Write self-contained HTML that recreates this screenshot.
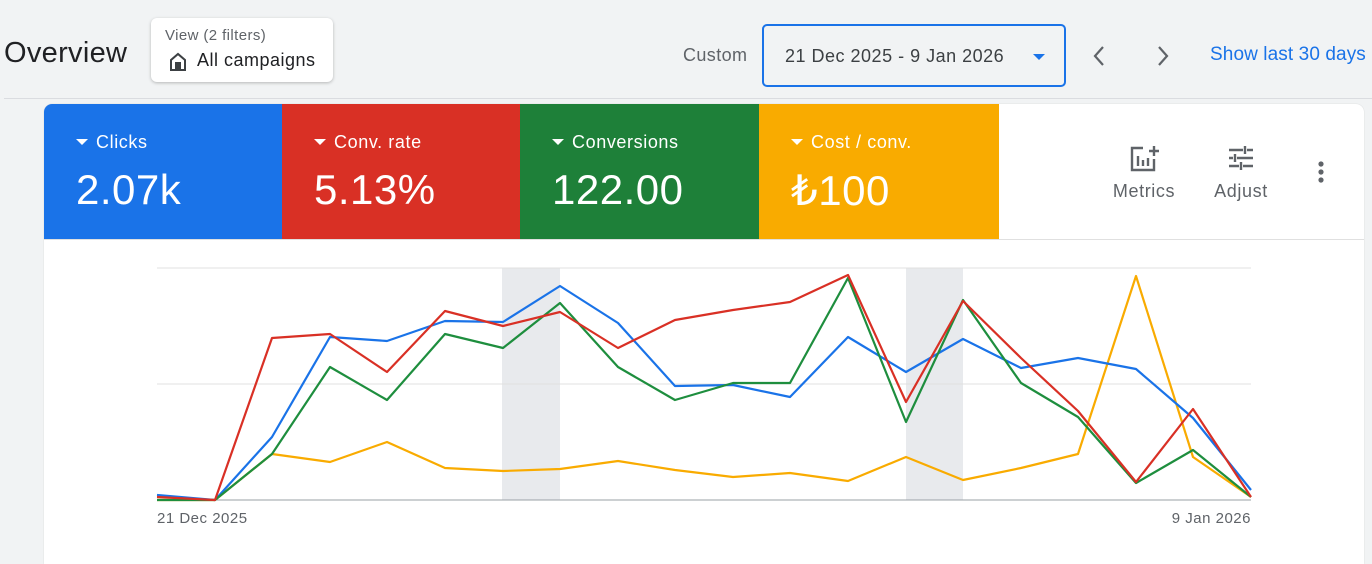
<!DOCTYPE html>
<html><head><meta charset="utf-8"><style>
*{margin:0;padding:0;box-sizing:border-box}
body{width:1372px;height:552px;background:#f1f3f4;font-family:"Liberation Sans",sans-serif;position:relative;overflow:hidden;color:#202124}
.abs{position:absolute}
.ov{left:4px;top:37px;font-size:29px;letter-spacing:0.3px;color:#202124}
.view{left:151px;top:18px;width:182px;height:64px;background:#fff;border-radius:6px;box-shadow:0 1px 3px rgba(0,0,0,.25)}
.view .t1{position:absolute;left:14px;top:9px;font-size:15px;letter-spacing:0.4px;color:#5f6368}
.view .t2{position:absolute;left:46px;top:32px;font-size:18px;letter-spacing:0.5px;color:#202124}
.hr{left:4px;top:98px;width:1368px;height:1px;background:#dadce0}
.custom{left:683px;top:45px;font-size:18px;letter-spacing:0.4px;color:#5f6368}
.date{left:762px;top:24px;width:304px;height:63px;border:2px solid #1a73e8;border-radius:5px;background:#f1f3f4}
.date span{position:absolute;left:21px;top:20px;font-size:18px;letter-spacing:0.5px;color:#3c4043}
.date i{position:absolute;left:269px;top:28px;border-left:6px solid transparent;border-right:6px solid transparent;border-top:6px solid #1a73e8}
.link{left:1210px;top:44px;font-size:19px;letter-spacing:0.1px;color:#1a73e8}
.card{left:44px;top:104px;width:1320px;height:460px;background:#fff;border-radius:8px 8px 0 0;overflow:hidden;box-shadow:0 0 1px rgba(0,0,0,.2)}
.tile{position:absolute;top:0;height:135px;color:#fff}
.tile .l{position:absolute;left:32px;top:28px;font-size:18px;letter-spacing:0.6px}
.tile .l:before{content:"";display:inline-block;border-left:6px solid transparent;border-right:6px solid transparent;border-top:6px solid #fff;margin-right:8px;vertical-align:3px}
.tile .v{position:absolute;left:32px;top:62px;font-size:42px;letter-spacing:0.5px}
.lbl{font-size:18px;letter-spacing:0.6px;color:#5f6368;width:100px;text-align:center}
</style></head><body>
<div class="abs ov">Overview</div>
<div class="abs view"><div class="t1">View (2 filters)</div>
<svg class="abs" style="left:17px;top:34px" width="20" height="20" viewBox="0 0 20 20"><path d="M3 18V8l7-6 7 6v10z" fill="none" stroke="#3c4043" stroke-width="2"/><rect x="7" y="10" width="6" height="8" fill="#3c4043"/></svg>
<div class="t2">All campaigns</div></div>
<div class="abs hr"></div>
<div class="abs custom">Custom</div>
<div class="abs date"><span>21 Dec 2025 - 9 Jan 2026</span><i></i></div>
<svg class="abs" style="left:1088px;top:44px" width="22" height="24"><path d="M15 3 7 12l8 9" fill="none" stroke="#5f6368" stroke-width="2.2"/></svg>
<svg class="abs" style="left:1152px;top:44px" width="22" height="24"><path d="M7 3l8 9-8 9" fill="none" stroke="#5f6368" stroke-width="2.2"/></svg>
<div class="abs link">Show last 30 days</div>
<div class="abs card">
<div class="tile" style="left:0;width:238px;background:#1a73e8"><div class="l">Clicks</div><div class="v">2.07k</div></div>
<div class="tile" style="left:238px;width:238px;background:#d93025"><div class="l">Conv. rate</div><div class="v">5.13%</div></div>
<div class="tile" style="left:476px;width:239px;background:#1e8039"><div class="l">Conversions</div><div class="v">122.00</div></div>
<div class="tile" style="left:715px;width:240px;background:#f9ab00"><div class="l">Cost / conv.</div><div class="v">₺100</div></div>
<div style="position:absolute;left:0;top:135px;width:1320px;height:1px;background:#e0e0e0"></div>
<svg class="abs" style="left:1085px;top:40px" width="32" height="30" viewBox="0 0 32 30"><path d="M14 4H3v22h22V15" fill="none" stroke="#5f6368" stroke-width="2.4"/><path d="M9 12v10M14 16v6M19 14v8M25 2v10M20 7h10" stroke="#5f6368" stroke-width="2.4"/></svg>
<div class="abs lbl" style="left:1050px;top:77px">Metrics</div>
<svg class="abs" style="left:1183px;top:40px" width="28" height="28" viewBox="0 0 28 28"><path d="M2 6h14M20 6h6M18 2v8M2 14h4M10 14h16M8 10v8M2 22h10M16 22h10M14 18v8" stroke="#5f6368" stroke-width="2.4"/></svg>
<div class="abs lbl" style="left:1147px;top:77px">Adjust</div>
<svg class="abs" style="left:1270px;top:56px" width="14" height="26"><circle cx="7" cy="4" r="2.6" fill="#5f6368"/><circle cx="7" cy="12" r="2.6" fill="#5f6368"/><circle cx="7" cy="20" r="2.6" fill="#5f6368"/></svg>
</div>
<svg class="abs" style="left:0;top:0" width="1372" height="552">
<rect x="502" y="268" width="58" height="232" fill="#e8eaed"/>
<rect x="906" y="268" width="57" height="232" fill="#e8eaed"/>
<line x1="157" y1="268" x2="1251" y2="268" stroke="#e0e0e0"/>
<line x1="157" y1="384" x2="1251" y2="384" stroke="#e0e0e0"/>
<line x1="157" y1="500" x2="1251" y2="500" stroke="#9aa0a6"/>
<g fill="none" stroke-width="2.2" stroke-linejoin="round">
<polyline stroke="#f9ab00" points="157,500 215,500 272,454 330,462 387,442 445,468 503,471 560,469 618,461 675,470 733,477 790,473 848,481 906,457 963,480 1021,468 1078,454 1136,276 1193,457 1251,497"/>
<polyline stroke="#1a73e8" points="157,495 215,500 272,437 330,337 387,341 445,321 503,322 560,286 618,323 675,386 733,385 790,397 848,337 906,372 963,339 1021,368 1078,358 1136,369 1193,418 1251,490"/>
<polyline stroke="#1e8e3e" points="157,500 215,500 272,454 330,367 387,400 445,334 503,348 560,303 618,367 675,400 733,383 790,383 848,278 906,422 963,300 1021,383 1078,417 1136,483 1193,450 1251,497"/>
<polyline stroke="#d93025" points="157,497 215,500 272,338 330,334 387,372 445,311 503,326 560,312 618,348 675,320 733,310 790,302 848,275 906,402 963,301 1021,358 1078,411 1136,482 1193,409 1251,497"/>
</g>
<text x="157" y="523" font-size="15" letter-spacing="0.5" fill="#5f6368" font-family="Liberation Sans">21 Dec 2025</text>
<text x="1251" y="523" font-size="15" letter-spacing="0.5" fill="#5f6368" font-family="Liberation Sans" text-anchor="end">9 Jan 2026</text>
</svg>
</body></html>
